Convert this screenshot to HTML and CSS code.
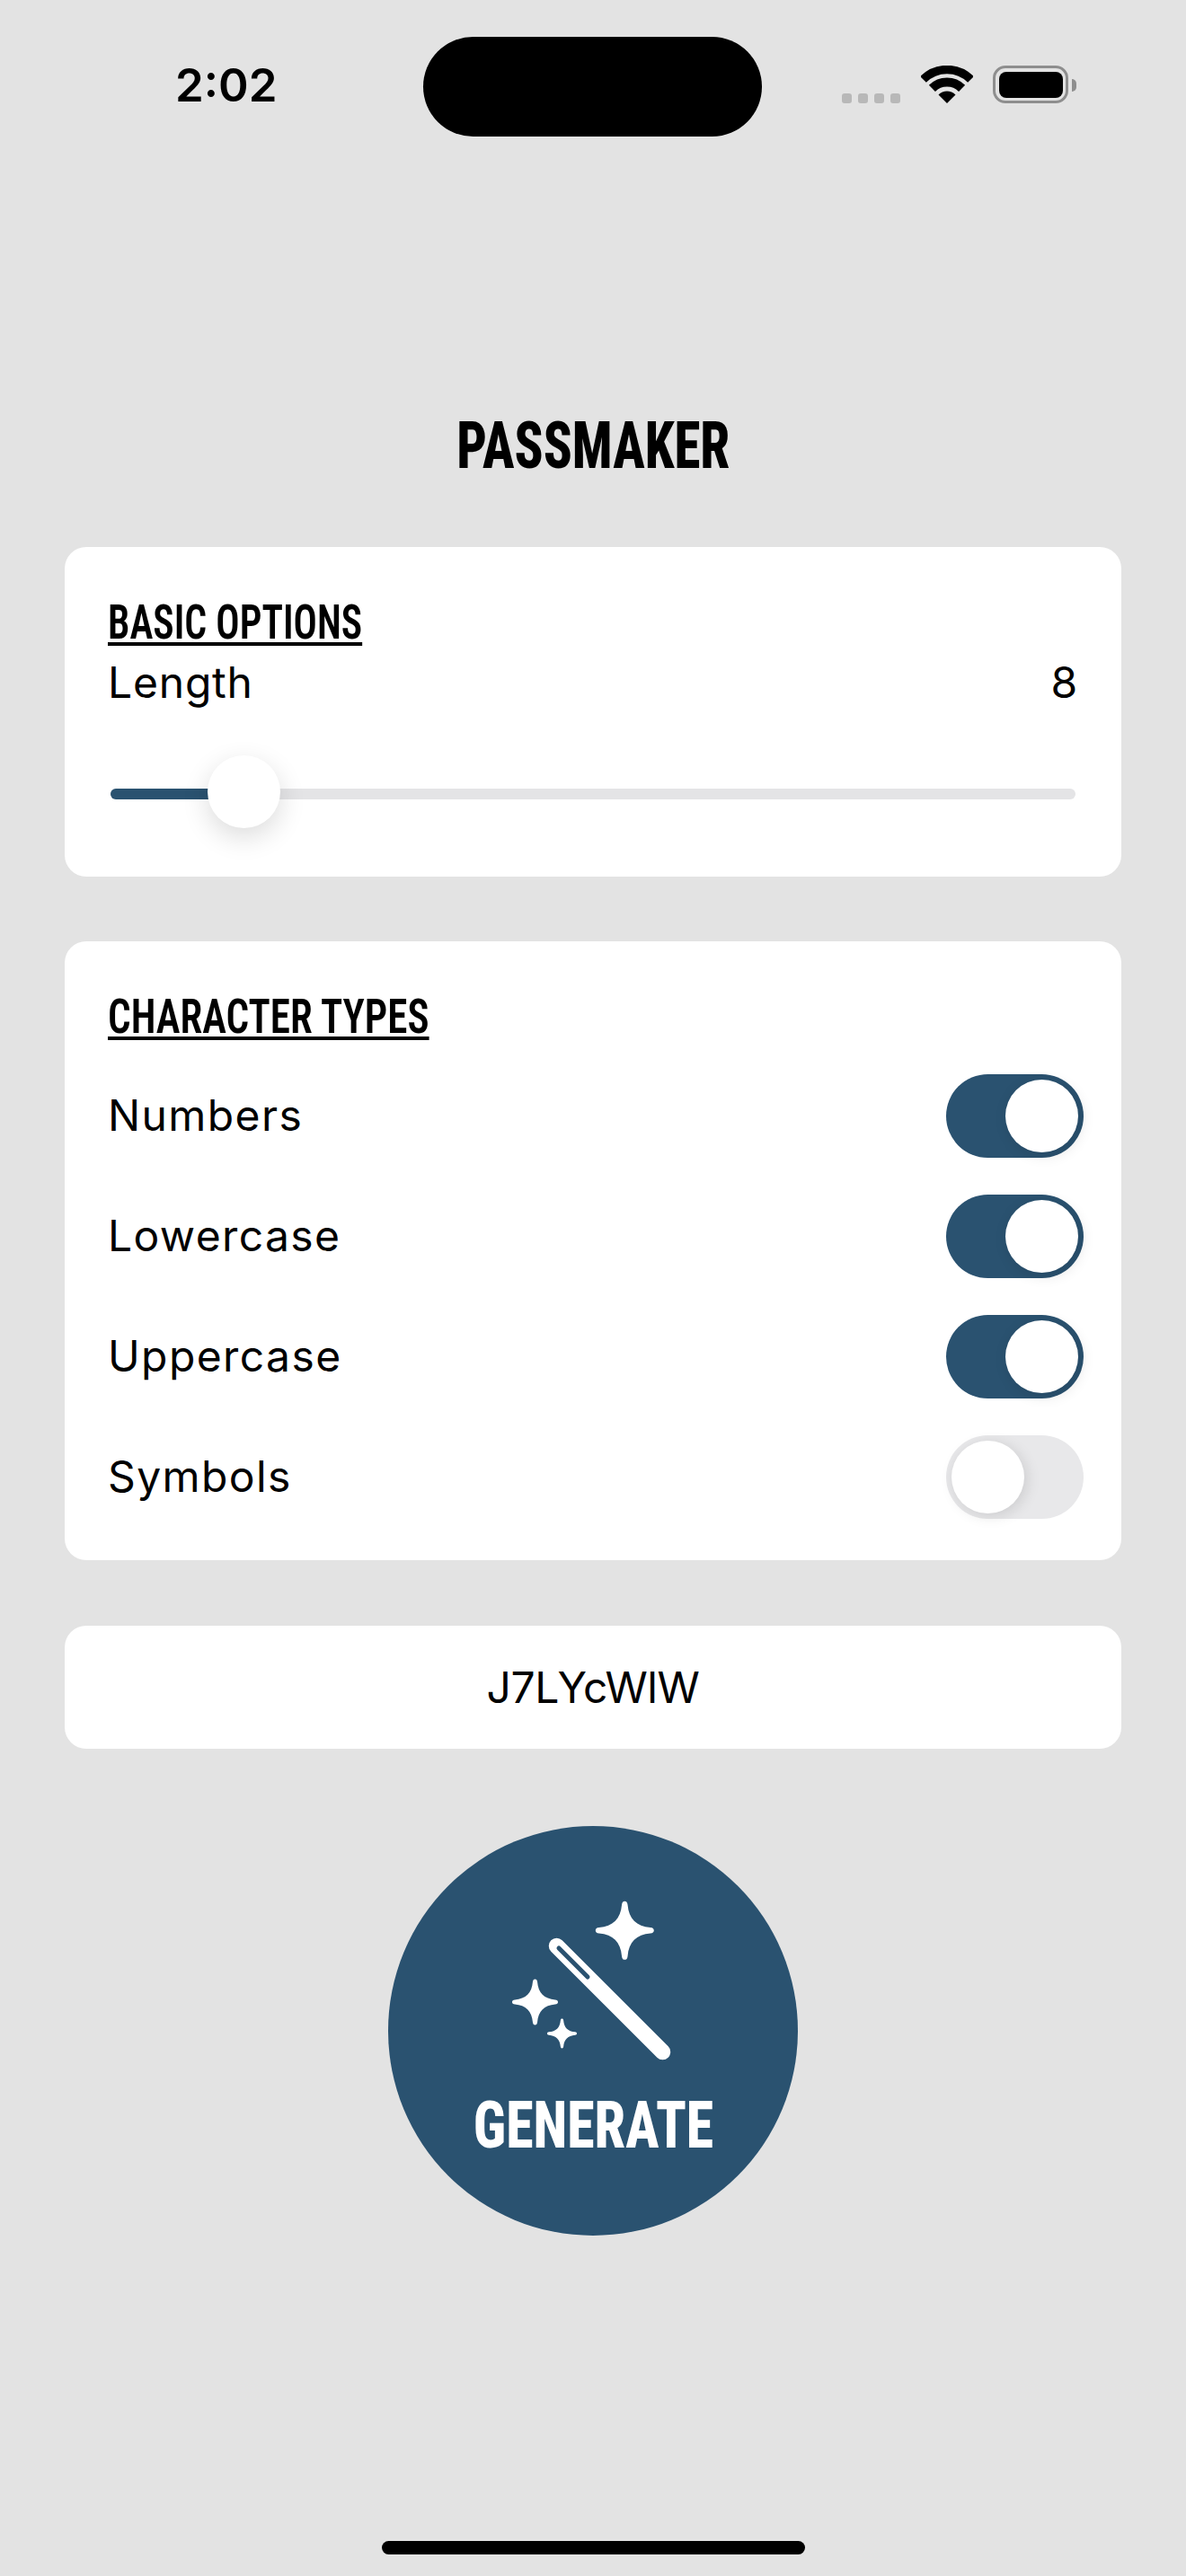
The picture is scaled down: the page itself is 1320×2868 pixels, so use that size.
FILE: index.html
```html
<!DOCTYPE html>
<html lang="en">
<head>
<meta charset="utf-8">
<title>Passmaker</title>
<link rel="stylesheet" href="styles.css">
</head>
<body>
<main class="screen">
  <header class="status">
    <span class="time">2:02</span>
    <div class="island"></div>
    <div class="indicators">
      <div class="dots"><i></i><i></i><i></i><i></i></div>
      <svg class="wifi" width="58" height="42" viewBox="0 0 58 42">
        <path d="M2.5 15.5A37.5 37.5 0 0 1 55.5 15.5" class="arc a1"/>
        <path d="M12.4 25.4A23.5 23.5 0 0 1 45.6 25.4" class="arc a2"/>
        <path d="M29 42L19.5 32.5A13.5 13.5 0 0 1 38.5 32.5Z" class="wedge"/>
      </svg>
      <div class="battery"><div class="battery-fill"></div></div>
      <div class="battery-cap"></div>
    </div>
  </header>

  <h1 class="title">PASSMAKER</h1>

  <section class="card card-basic">
    <h2 class="heading">BASIC OPTIONS</h2>
    <div class="row-length"><span>Length</span><span>8</span></div>
    <div class="slider">
      <div class="track"><div class="track-fill"></div></div>
      <div class="thumb"></div>
    </div>
  </section>

  <section class="card card-types">
    <h2 class="heading heading-types">CHARACTER TYPES</h2>
    <div class="option"><span>Numbers</span><div class="switch on"><div class="knob"></div></div></div>
    <div class="option"><span>Lowercase</span><div class="switch on"><div class="knob"></div></div></div>
    <div class="option"><span>Uppercase</span><div class="switch on"><div class="knob"></div></div></div>
    <div class="option"><span>Symbols</span><div class="switch"><div class="knob"></div></div></div>
  </section>

  <section class="card card-password">J7LYcWlW</section>

  <button class="generate" type="button">
    <svg class="wand" width="200" height="190" viewBox="0 0 200 190">
      <defs>
        <path id="star" d="M0-100C6-100 9-96 10-88C14-40 40-14 88-10C96-9 100-6 100 0C100 6 96 9 88 10C40 14 14 40 10 88C9 96 6 100 0 100C-6 100-9 96-10 88C-14 40-40 14-88 10C-96 9-100 6-100 0C-100-6-96-9-88-10C-40-14-14-40-10-88C-9-96-6-100 0-100Z"/>
      </defs>
      <use href="#star" class="star" transform="translate(135.3 39.3) scale(.325)"/>
      <use href="#star" class="star" transform="translate(35.5 119) scale(.255)"/>
      <use href="#star" class="star" transform="translate(65.5 154) scale(.165)"/>
      <path d="M59.5 56.5L177.5 174.5" class="wand-body"/>
      <path d="M62 59L94 91" class="wand-slit"/>
    </svg>
    <span class="generate-label">GENERATE</span>
  </button>

  <div class="home"></div>
</main>
</body>
</html>
```
FILE: styles.css
```css
* { box-sizing: border-box; }
html, body { margin: 0; padding: 0; }
body { background: #e3e3e3; }
.screen {
  width: 1320px;
  height: 2868px;
  overflow: hidden;
  display: flex;
  flex-direction: column;
  align-items: center;
  background: #e3e3e3;
  color: #000;
  font-family: Inter, "Noto Sans", sans-serif;
}
.status {
  width: 100%;
  height: 152px;
  margin-top: 41px;
  display: flex;
  align-items: flex-start;
  position: relative;
}
.time {
  width: 195px;
  margin-left: 195px;
  margin-top: 24px;
  font-size: 51px;
  font-weight: 600;
  line-height: 60px;
}
.island {
  width: 377px;
  height: 111px;
  margin-left: 81px;
  border-radius: 56px;
  background: #000;
}
.indicators {
  margin-left: 89px;
  margin-top: 32px;
  height: 42px;
  display: flex;
  align-items: flex-start;
}
.dots { display: flex; gap: 7px; margin-top: 31px; }
.dots i { width: 11px; height: 11px; border-radius: 3px; background: #b8b8b8; display: block; }
.wifi { margin-left: 23px; }
.arc { fill: none; stroke: #000; }
.a1 { stroke-width: 9.5; }
.a2 { stroke-width: 10; }
.wedge { fill: #000; }
.battery {
  width: 84px;
  height: 42px;
  margin-left: 22px;
  border: 3.5px solid #8e8e8e;
  border-radius: 14px;
  padding: 3.5px;
}
.battery-fill { width: 100%; height: 100%; background: #000; border-radius: 8px; }
.battery-cap {
  width: 5px;
  height: 14px;
  margin: 15px 0 0 4px;
  background: #8e8e8e;
  border-radius: 0 5px 5px 0;
}

.title, .heading, .generate-label {
  font-family: Roboto, "Open Sans", sans-serif;
  font-stretch: 75%;
}
.title {
  margin: 264px 0 0;
  font-size: 72px;
  line-height: 80px;
  font-weight: 800;
  transform: scaleX(.82);
}
.card {
  width: 1176px;
  background: #fff;
  border-radius: 24px;
}
.card-basic { margin-top: 72px; height: 367px; padding: 56px 48px 0; }
.heading {
  margin: 0;
  width: fit-content;
  font-size: 54px;
  line-height: 56px;
  font-weight: 600;
  transform: scaleX(.81);
  transform-origin: left center;
  text-decoration: underline;
  text-decoration-thickness: 4px;
  text-underline-offset: 4px;
}
.row-length {
  display: flex;
  justify-content: space-between;
  font-size: 48px;
  line-height: 60px;
  font-weight: 400;
  letter-spacing: 0.8px;
  margin-top: 9px;
}
.slider { position: relative; margin-top: 53px; height: 81px; display: flex; align-items: center; }
.track { width: 1074px; margin-left: 3px; height: 12px; border-radius: 6px; background: #e4e4e6; overflow: hidden; }
.track-fill { width: 130px; height: 100%; background: #2a5270; }
.thumb {
  position: absolute;
  left: 111px;
  top: -2px;
  width: 81px;
  height: 81px;
  border-radius: 50%;
  background: #fff;
  box-shadow: 0 10px 30px rgba(0,0,0,.14);
}

.card-types { margin-top: 72px; height: 689px; padding: 56px 42px 0 48px; }
.heading-types { margin-bottom: 36px; transform: scaleX(.835); }
.option {
  display: flex;
  justify-content: space-between;
  align-items: center;
  font-size: 48px;
  font-weight: 400;
  letter-spacing: 1.4px;
  height: 93px;
  margin-bottom: 41px;
}
.option span { margin-top: -3px; }
.switch {
  width: 153px;
  height: 93px;
  padding: 6px;
  border-radius: 47px;
  background: #e8e8ea;
  display: flex;
}
.switch.on { background: #2a5270; justify-content: flex-end; }
.knob { width: 81px; height: 81px; border-radius: 50%; background: #fff; box-shadow: 3px 3px 16px rgba(0,0,0,.12); }

.card-password {
  margin-top: 73px;
  height: 137px;
  display: flex;
  align-items: center;
  justify-content: center;
  font-size: 48px;
  font-weight: 400;
  letter-spacing: -0.4px;
}
.generate {
  margin-top: 86px;
  width: 456px;
  height: 456px;
  border: 0;
  padding: 77px 0 0;
  border-radius: 50%;
  background: #2a5270;
  color: #fff;
  display: flex;
  flex-direction: column;
  align-items: center;
}
.star { fill: #fff; }
.wand-body { fill: none; stroke: #fff; stroke-width: 17.5; stroke-linecap: round; }
.wand-slit { fill: none; stroke: #2a5270; stroke-width: 5; stroke-linecap: round; }
.generate-label { font-size: 72px; line-height: 80px; font-weight: 800; margin-top: 27px; transform: scaleX(.86); }
.home {
  margin-top: auto;
  margin-bottom: 24px;
  width: 471px;
  height: 15px;
  border-radius: 8px;
  background: #000;
}
```
